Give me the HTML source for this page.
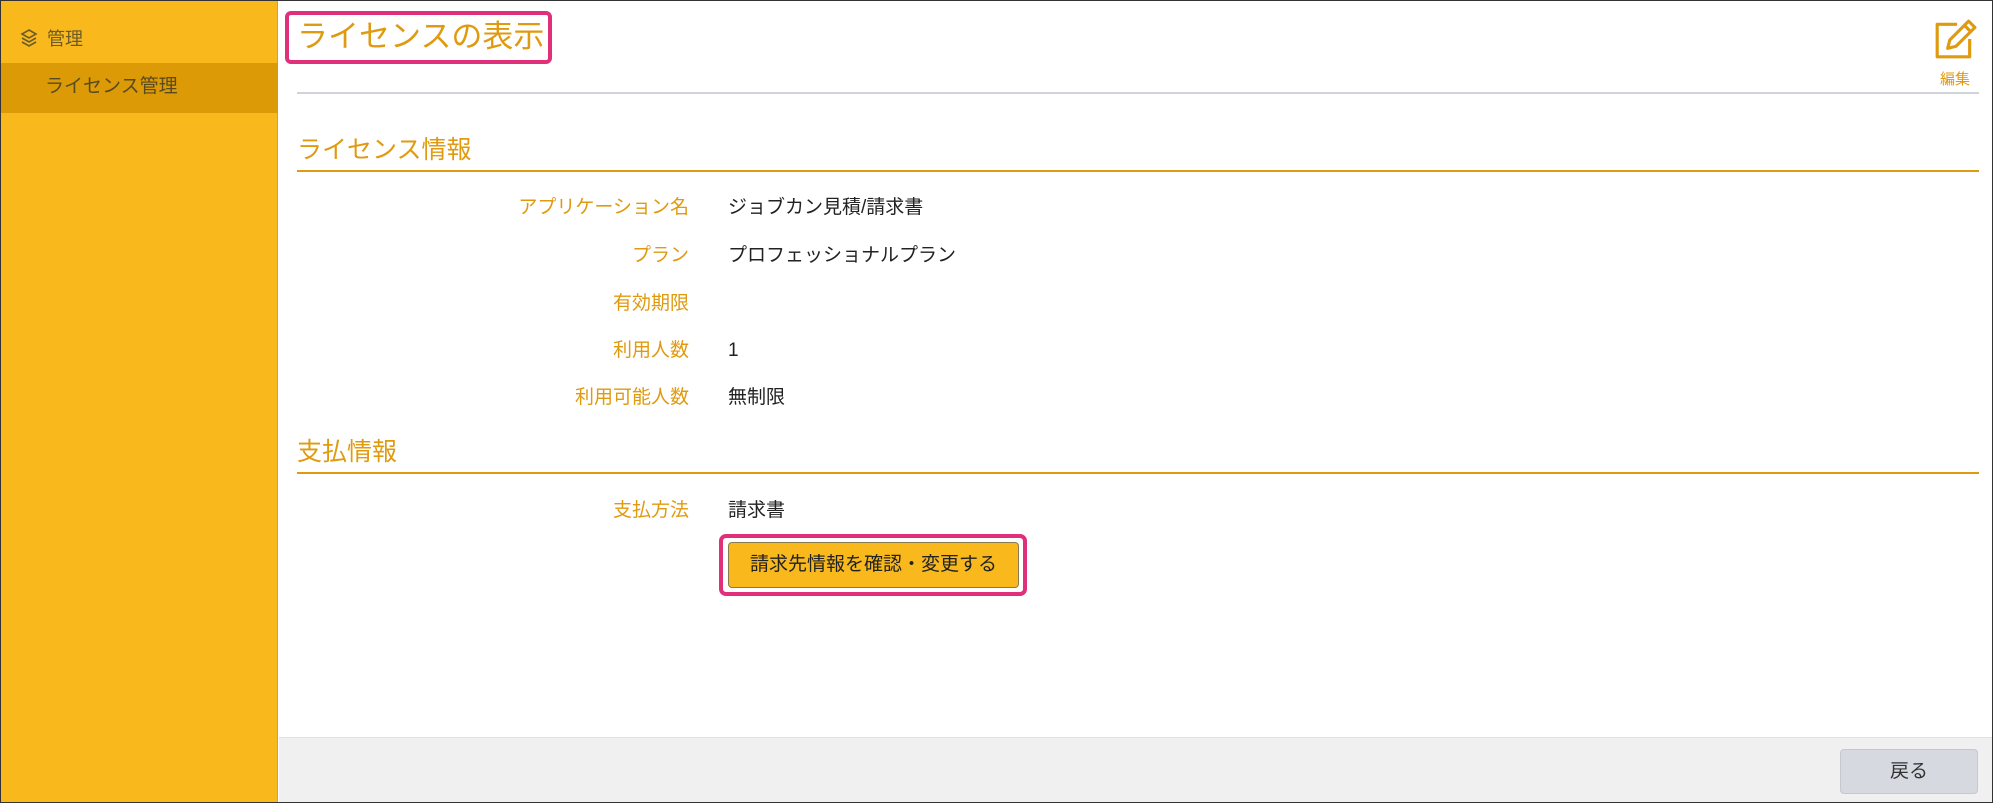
<!DOCTYPE html>
<html><head><meta charset="utf-8"><style>
*{box-sizing:border-box;margin:0;padding:0}
html,body{width:1993px;height:803px;overflow:hidden;background:#fff;font-family:"Liberation Sans","Noto Sans CJK JP",sans-serif}
.frame{position:absolute;left:0;top:0;width:1993px;height:803px;border:1px solid #333}
.side{position:absolute;left:1px;top:1px;width:277px;height:801px;background:#F9B91C;border-right:1px solid #e0a010}
.side .h{position:absolute;left:18px;top:24px;font-size:18px;color:#6b5a2a;display:flex;align-items:center;gap:8px}
.side .act{position:absolute;left:0;top:62px;width:277px;height:50px;background:#DB9A06;color:#5a4a20;font-size:19px;padding-left:44px;line-height:48px}
.title{position:absolute;left:285px;top:11px;width:267px;height:53px;border:4px solid #E0307A;border-radius:6px;font-size:31px;line-height:43px;padding-left:8px;color:#E09A0F}
.hr{position:absolute;left:297px;top:92px;width:1682px;height:2px;background:#d0d3d8}
.edit{position:absolute;left:1928px;top:18px;width:54px;text-align:center;color:#E09A0F;font-size:15px}
.sec{position:absolute;left:297px;width:1682px;font-size:25px;color:#E09A0F;border-bottom:2px solid #E09A0F;height:36px;line-height:28px}
.lab,.val{position:absolute;font-size:19px;line-height:24px;height:24px;white-space:nowrap}
.lab{right:1304px;color:#E09A0F;text-align:right}
.val{left:728px;color:#222}
.pink{position:absolute;left:719px;top:534px;width:308px;height:62px;border:4px solid #E0307A;border-radius:7px}
.btn{position:absolute;left:728px;top:542px;width:291px;height:46px;background:#F9B91C;border:1px solid #8a7a50;border-radius:4px;font-size:19px;color:#222;text-align:center;line-height:44px}
.foot{position:absolute;left:279px;top:737px;width:1713px;height:65px;background:#f0f0f0;border-top:1px solid #e2e2e2}
.back{position:absolute;left:1840px;top:749px;width:138px;height:45px;background:#d6d9df;border:1px solid #c4c8cf;border-radius:4px;font-size:19px;color:#333;text-align:center;line-height:43px}
</style></head><body>
<div class="frame"></div>
<div class="side">
 <div class="h"><svg width="20" height="20" viewBox="0 0 20 20" fill="none" stroke="#6b5a2a" stroke-width="1.6"><path d="M10 2L17 6L10 10L3 6Z"/><path d="M3 10L10 14L17 10"/><path d="M3 14L10 18L17 14"/></svg>管理</div>
 <div class="act">ライセンス管理</div>
</div>
<div class="title">ライセンスの表示</div>
<div class="hr"></div>
<div class="edit"><svg width="48" height="44" viewBox="0 0 44 42" fill="none" stroke="#E09A0F" stroke-width="3" stroke-linejoin="round"><path d="M24 6H5V37H36V20"/><path d="M35 3L41 9L23 27L15 29L17 21Z"/><path d="M31 7L37 13"/></svg><div style="margin-top:2px">編集</div></div>
<div class="sec" style="top:136px">ライセンス情報</div>
<div class="lab" style="top:196px">アプリケーション名</div><div class="val" style="top:196px">ジョブカン見積/請求書</div>
<div class="lab" style="top:244px">プラン</div><div class="val" style="top:244px">プロフェッショナルプラン</div>
<div class="lab" style="top:292px">有効期限</div>
<div class="lab" style="top:339px">利用人数</div><div class="val" style="top:339px">1</div>
<div class="lab" style="top:386px">利用可能人数</div><div class="val" style="top:386px">無制限</div>
<div class="sec" style="top:438px">支払情報</div>
<div class="lab" style="top:499px">支払方法</div><div class="val" style="top:499px">請求書</div>
<div class="pink"></div>
<div class="btn">請求先情報を確認・変更する</div>
<div class="foot"></div>
<div class="back">戻る</div>
</body></html>
